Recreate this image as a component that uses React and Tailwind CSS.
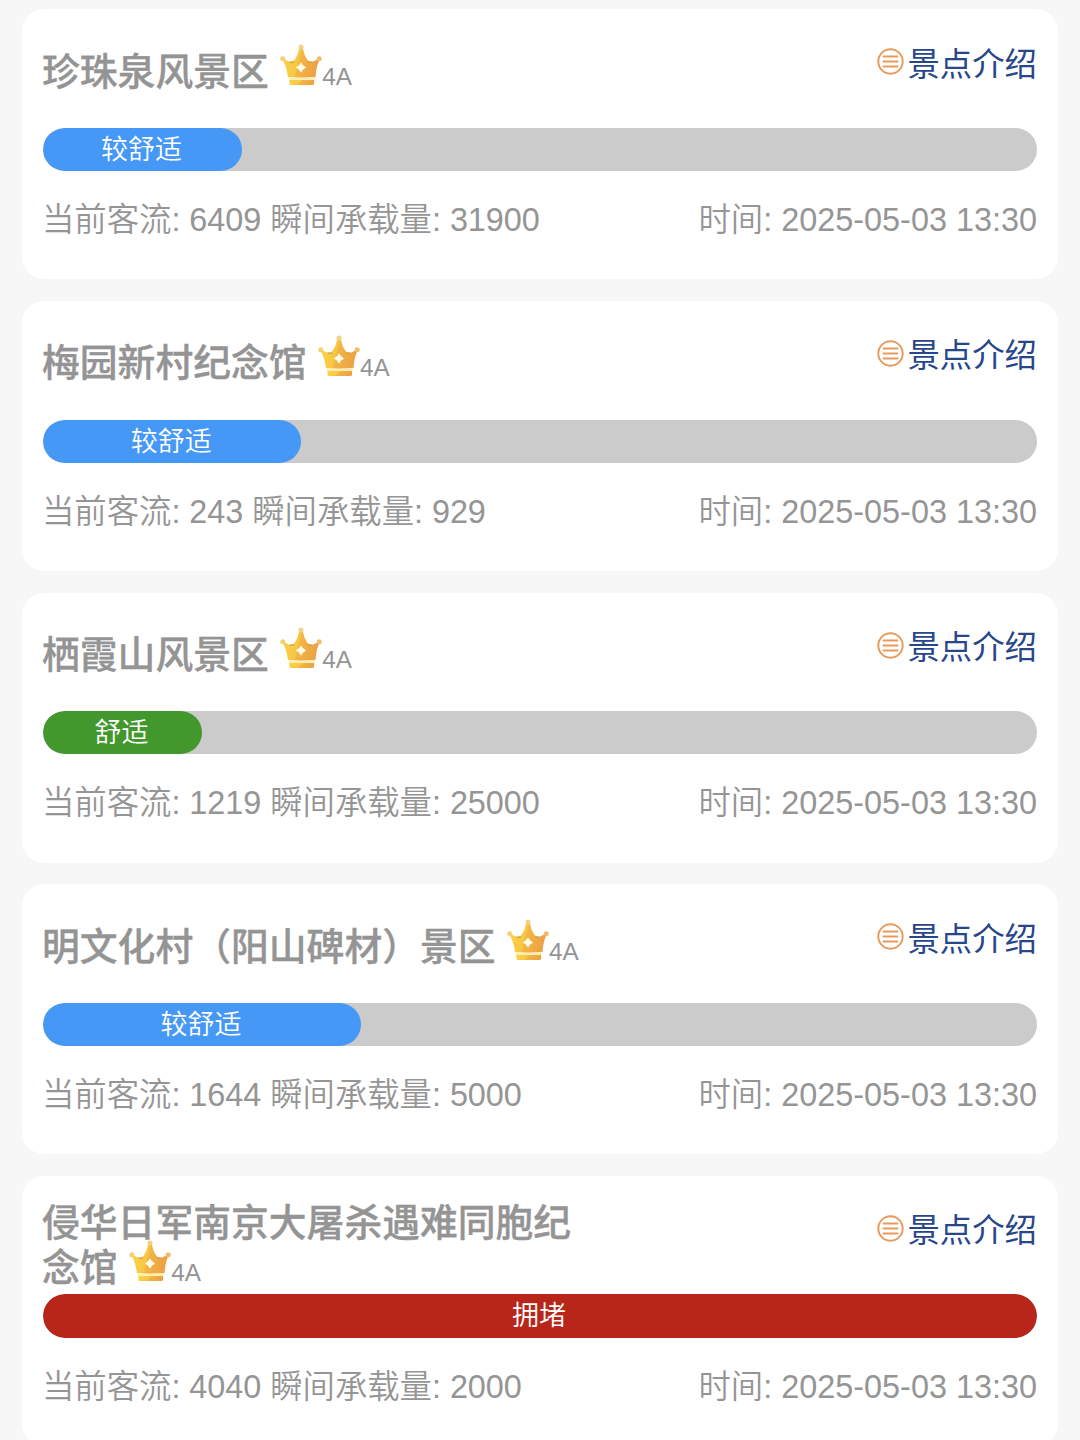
// App.jsx

const LEVELS = {
  comfortable: { label: '舒适', color: 'bg-[#42982d]' },
  moderate: { label: '较舒适', color: 'bg-[#4698f7]' },
  crowded: { label: '拥堵', color: 'bg-[#b8261a]' },
};

const spots = [
  { name: '珍珠泉风景区', grade: '4A', level: 'moderate', percent: 20, current: 6409, capacity: 31900 },
  { name: '梅园新村纪念馆', grade: '4A', level: 'moderate', percent: 26, current: 243, capacity: 929 },
  { name: '栖霞山风景区', grade: '4A', level: 'comfortable', percent: 16, current: 1219, capacity: 25000 },
  { name: '明文化村（阳山碑材）景区', grade: '4A', level: 'moderate', percent: 32, current: 1644, capacity: 5000 },
  { name: '侵华日军南京大屠杀遇难同胞纪念馆', grade: '4A', level: 'crowded', percent: 100, current: 4040, capacity: 2000 },
];

const updatedAt = '2025-05-03 13:30';

function CrownIcon() {
  return (
    <svg viewBox="0 0 42 42" className="inline-block w-[42px] h-[42px] -mt-4 ml-px align-[-1px]">
      <defs>
        <linearGradient id="crown" x1="0" y1="0" x2="1" y2="0.2">
          <stop offset="0" stopColor="#f9d548" />
          <stop offset="0.48" stopColor="#f8c744" />
          <stop offset="0.54" stopColor="#f2b544" />
          <stop offset="1" stopColor="#eca244" />
        </linearGradient>
      </defs>
      <path d="M1.5 14 L9 17.5 Q12 18.5 14.5 16 Q18 11 19.3 4 H22.7 Q24 11 27.5 16 Q30 18.5 33 17.5 L40.5 14 Q36.5 20 35.5 33 Q21 34.5 8 33 Q6 20 1.5 14 Z" fill="url(#crown)" />
      <circle cx="21" cy="3" r="2.5" fill="#f3d083" />
      <circle cx="2.8" cy="14.8" r="2.5" fill="#f5cf74" />
      <circle cx="39.2" cy="14.8" r="2.5" fill="#f1bd6c" />
      <path d="M10 18.2 H13.5 M28.5 18.2 H32" stroke="#c9a04a" strokeWidth="1.2" strokeLinecap="round" />
      <path d="M21 19.5 Q22 22.5 25 23.5 Q22 24.500 21 27.500 Q20 24.500 17 23.500 Q20 22.500 21 19.500 Z" fill="#fffbe8" stroke="#fffbe8" strokeWidth="1.6" strokeLinejoin="round" />
      <path d="M8.5 33 Q21 34.5 35 33 L34.5 37 H9 Z" fill="#fdeeb0" />
      <path d="M9.5 36 H34 V39.5 Q34 41 32.5 41 H11 Q9.5 41 9.5 39.5 Z" fill="url(#crown)" />
    </svg>
  );
}

function ListIcon() {
  return (
    <svg viewBox="0 0 27 27" fill="none" stroke="#e79a5c" strokeLinecap="round" className="w-[27px] h-[27px] mb-[6px]">
      <circle cx="13.5" cy="13.5" r="12.2" strokeWidth="1.9" />
      <path d="M6.5 8.5 H20.5 M6.5 13.5 H20.5 M6.5 18.5 H20.5" strokeWidth="1.9" />
    </svg>
  );
}

function SpotCard({ spot }) {
  const level = LEVELS[spot.level];
  // Names over 14 characters wrap onto a second line
  const wraps = spot.name.length > 14;

  return (
    <div className="h-[270px] shrink-0 px-[21px] bg-white rounded-[22px]">
      <div className="flex items-start justify-between h-[118.6px]">
        <h2 className={`w-[556px] -ml-px text-[37.8px] leading-[45px] font-medium text-[#949494] [-webkit-text-stroke:0.35px_#949494] ${wraps ? 'pt-[25px]' : 'pt-[40.5px]'}`}>
          {spot.name}{' '}
          <CrownIcon />
          <span className="text-[24.3px] leading-none font-normal [-webkit-text-stroke:0px]">{spot.grade}</span>
        </h2>
        <a href="#" className="flex items-center pt-[32.5px] text-[32.4px] leading-[46px] text-[#28478a]">
          <ListIcon />
          <span className="ml-[3px]">景点介绍</span>
        </a>
      </div>
      <div className="h-[43.2px] rounded-full bg-[#cbcbcb] overflow-hidden">
        <div
          className={`h-full pr-0.5 rounded-full text-center text-[27px] leading-[45px] font-[350] text-white ${level.color}`}
          style={{ width: `${spot.percent}%` }}
        >
          {level.label}
        </div>
      </div>
      <div className="flex justify-between pt-[25px] text-[32.4px] leading-[48px] font-[350] text-[#959595]">
        <span className="-ml-px tracking-[-0.04px]">当前客流: {spot.current} 瞬间承载量: {spot.capacity}</span>
        <span>时间: {updatedAt}</span>
      </div>
    </div>
  );
}

export default function App() {
  return (
    <div className="flex flex-col gap-[21.6px] h-[1440px] px-[22px] pt-[9.4px] overflow-hidden bg-[#f7f7f7] font-['Liberation_Sans','Noto_Sans_CJK_SC',sans-serif]">
      {spots.map((spot) => (
        <SpotCard key={spot.name} spot={spot} />
      ))}
    </div>
  );
}
